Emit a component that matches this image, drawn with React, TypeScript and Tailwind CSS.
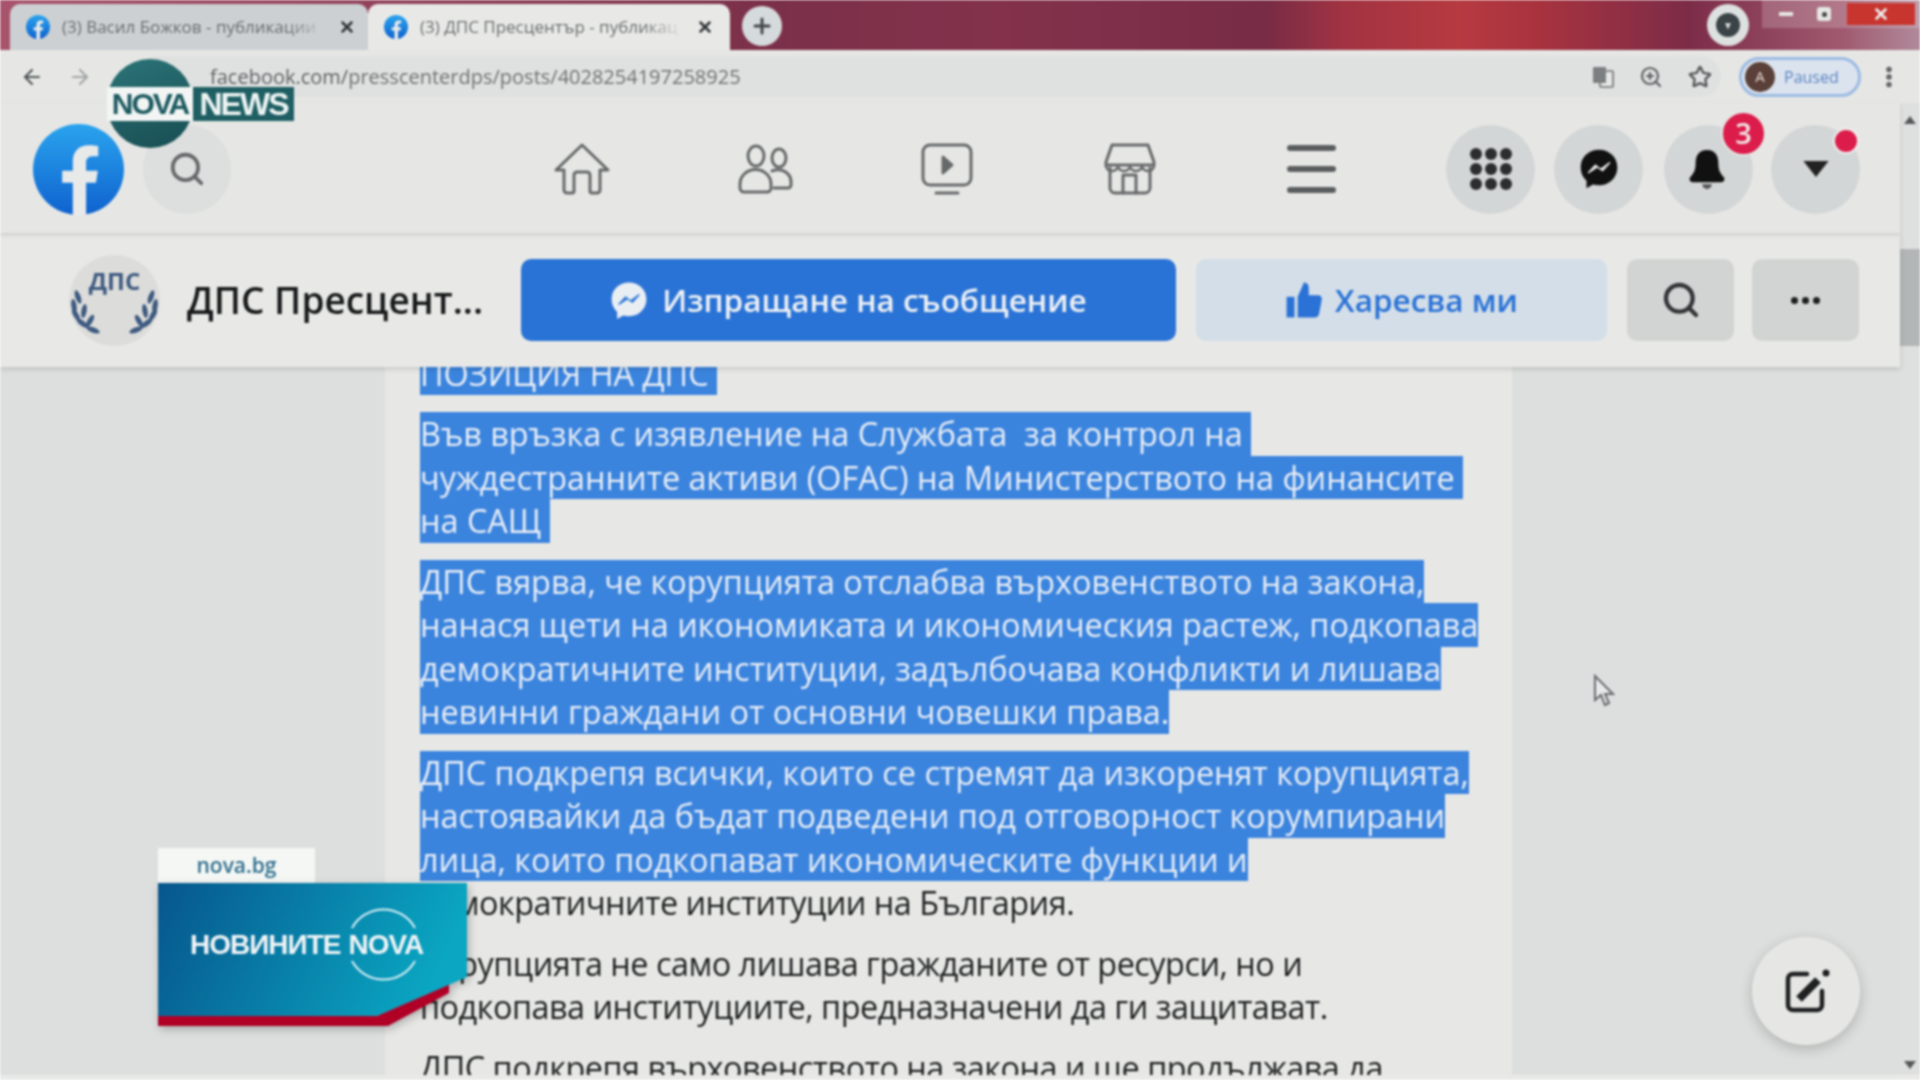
import { ArrowLeft, ArrowRight, EllipsisVertical, Plus, Search, Star, X, ZoomIn } from 'lucide-react';

const bodyFont = "font-['Open_Sans','Noto_Sans',sans-serif]";

const paragraphs: { lines: string[]; selected: boolean[] }[] = [
    { lines: ['ПОЗИЦИЯ НА ДПС '], selected: [true] },
    {
        lines: [
            'Във връзка с изявление на Службата  за контрол на ',
            'чуждестранните активи (OFAC) на Министерството на финансите ',
            'на САЩ ',
        ],
        selected: [true, true, true],
    },
    {
        lines: [
            'ДПС вярва, че корупцията отслабва върховенството на закона,',
            'нанася щети на икономиката и икономическия растеж, подкопава',
            'демократичните институции, задълбочава конфликти и лишава',
            'невинни граждани от основни човешки права.',
        ],
        selected: [true, true, true, true],
    },
    {
        lines: [
            'ДПС подкрепя всички, които се стремят да изкоренят корупцията,',
            'настоявайки да бъдат подведени под отговорност корумпирани',
            'лица, които подкопават икономическите функции и',
            'демократичните институции на България.',
        ],
        selected: [true, true, true, false],
    },
    {
        lines: ['Корупцията не само лишава гражданите от ресурси, но и', 'подкопава институциите, предназначени да ги защитават.'],
        selected: [false, false],
    },
    { lines: ['ДПС подкрепя върховенството на закона и ще продължава да'], selected: [false] },
];

// laurel leaves of the page avatar: cx, cy, rotation
const leaves: [number, number, number][] = [
    [9, 8, 70],
    [5, 17, 80],
    [7, 26, 60],
    [15, 22, 100],
    [13, 34, 40],
    [21, 32, 120],
    [24, 41, 20],
];

function FbGlyph({ size }: { size: number }) {
    return (
        <svg width={size} height={size} viewBox="0 0 24 24" className="shrink-0">
            <defs>
                <linearGradient id={`fb${size}`} x1="0" y1="0" x2="0" y2="1">
                    <stop offset="0" stopColor="#2aa4ee" />
                    <stop offset="1" stopColor="#0f62cf" />
                </linearGradient>
            </defs>
            <circle cx="12" cy="12" r="12" fill={`url(#fb${size})`} />
            <path
                d="M16.6 15.5l.5-3.2h-3.1v-2.1c0-.9.4-1.7 1.8-1.7h1.4V5.8s-1.3-.2-2.5-.2c-2.5 0-4.2 1.5-4.2 4.3v2.4H7.7v3.2h2.8V24h3.5v-8.5z"
                fill="#e8eaea"
            />
        </svg>
    );
}

function Tab({ title, active }: { title: string; active?: boolean }) {
    return (
        <div
            className={`flex h-[46px] shrink-0 items-center rounded-t-[10px] pl-[16px] ${
                active ? 'w-[362px] bg-[#e8e9e7] pr-[16px]' : 'w-[358px] bg-[#ccd0d2] pr-[12px]'
            }`}
        >
            <FbGlyph size={24} />
            <span className="ml-[12px] w-[262px] overflow-hidden whitespace-nowrap text-[17px] text-[#6b6e70] font-['Open_Sans',sans-serif] [mask-image:linear-gradient(90deg,#000_85%,transparent)]">
                {title}
            </span>
            <X size={18} strokeWidth={3.4} className="ml-auto text-[#33363a]" />
        </div>
    );
}

function Toolbar() {
    return (
        <div className="flex h-[53px] items-center bg-[#e6e7e5] pl-[20px]">
            <ArrowLeft size={24} strokeWidth={2.2} className="text-[#55585a]" />
            <ArrowRight size={24} strokeWidth={2.2} className="ml-[24px] text-[#a3a6a7]" />
            <div className="ml-[44px] flex h-[41px] w-[1585px] items-center rounded-full bg-[#dfe1e0] pl-[74px] pr-[9px]">
                <span className="text-[20px] font-['Open_Sans',sans-serif] text-[#5f6264]">
                    facebook.com/<span className="text-[#6f7173]">presscenterdps/posts/4028254197258925</span>
                </span>
                <svg width="24" height="24" viewBox="0 0 24 24" className="ml-auto mr-[24px] text-[#6d7072]">
                    <rect x="9" y="6" width="13" height="16" rx="1" fill="#e6e7e5" stroke="currentColor" strokeWidth="1.6" />
                    <rect x="2" y="2" width="13" height="16" rx="1" fill="#7c7f81" />
                </svg>
                <ZoomIn size={24} strokeWidth={2.2} className="mr-[25px] text-[#5f6264]" />
                <Star size={24} strokeWidth={2.4} className="text-[#55585a]" />
            </div>
            <div className="ml-[18px] flex h-[40px] w-[122px] items-center rounded-full border-[3px] border-[#9dbbe3] bg-[#dbe3ee] pl-[3px]">
                <div className="flex h-[30px] w-[30px] items-center justify-center rounded-full bg-[#5a4038] text-[15px] text-[#e8d8d0] font-['Open_Sans',sans-serif]">
                    A
                </div>
                <span className="ml-[9px] text-[16px] text-[#5c86c4] font-['Open_Sans',sans-serif]">Paused</span>
            </div>
            <EllipsisVertical size={26} strokeWidth={3} className="ml-[15px] text-[#55585a]" />
        </div>
    );
}

function NavIcon({ width, height, marginClass, children }: { width: number; height: number; marginClass: string; children: React.ReactNode }) {
    return (
        <svg
            width={width}
            height={height}
            viewBox={`0 0 ${width} ${height}`}
            fill="none"
            stroke="#66696a"
            strokeWidth="3"
            strokeLinejoin="round"
            strokeLinecap="round"
            className={`shrink-0 ${marginClass}`}
        >
            {children}
        </svg>
    );
}

function RoundButton({ marginClass, children }: { marginClass: string; children: React.ReactNode }) {
    return (
        <div className={`relative flex h-[89px] w-[89px] shrink-0 items-center justify-center rounded-full bg-[#d3d6d6] ${marginClass}`}>
            {children}
        </div>
    );
}

function TopNav() {
    return (
        <div className="relative z-20 flex h-[130px] shrink-0 items-center bg-[#e6e7e5] pl-[33px] pt-[2px] shadow-[0_2px_4px_rgba(0,0,0,0.12)]">
            <FbGlyph size={91} />
            <div className="ml-[19px] flex h-[89px] w-[88px] items-center justify-center rounded-full bg-[#dcdfde]">
                <Search size={38} strokeWidth={2.4} className="text-[#66696a]" />
            </div>
            <NavIcon width={58} height={54} marginClass="ml-[322px]">
                <path d="M3 28 L29 3 L55 28 H47 V48 a3 3 0 0 1 -3 3 H39 a2 2 0 0 1 -2 -2 V33 a3 3 0 0 0 -3 -3 H24 a3 3 0 0 0 -3 3 V49 a2 2 0 0 1 -2 2 H14 a3 3 0 0 1 -3 -3 V28 Z" />
            </NavIcon>
            <NavIcon width={57} height={50} marginClass="ml-[126px]">
                <ellipse cx="19" cy="12" rx="8" ry="10" />
                <ellipse cx="42" cy="14" rx="7" ry="9" />
                <path d="M3 40 a15 14 0 0 1 31 0 V44 a4 4 0 0 1 -4 4 H7 a4 4 0 0 1 -4 -4 Z" />
                <path d="M35 27 C46 23 54 30 54 38 V41 a3 3 0 0 1 -3 3 H37" />
            </NavIcon>
            <NavIcon width={54} height={54} marginClass="ml-[126px]">
                <rect x="3" y="3" width="48" height="40" rx="7" />
                <path d="M23 15 L32 23 L23 31 Z" fill="#66696a" />
                <path d="M16 51 H38" />
            </NavIcon>
            <NavIcon width={54} height={54} marginClass="ml-[129px]">
                <path d="M9 3 H45 L51 20 V23 H3 V20 Z" />
                <path d="M3 24 a6 5 0 0 0 12 0 a6 5 0 0 0 12 0 a6 5 0 0 0 12 0 a6 5 0 0 0 12 0" strokeWidth="2.5" />
                <path d="M7 26 V46 a5 5 0 0 0 5 5 H42 a5 5 0 0 0 5 -5 V26" />
                <path d="M20 51 V33 H33 V51" />
            </NavIcon>
            <div className="ml-[130px] flex w-[49px] shrink-0 flex-col gap-[15px]">
                <div className="h-[6px] rounded-full bg-[#5a5d5e]" />
                <div className="h-[6px] rounded-full bg-[#5a5d5e]" />
                <div className="h-[6px] rounded-full bg-[#5a5d5e]" />
            </div>
            <RoundButton marginClass="ml-[110px]">
                <div className="grid grid-cols-3 gap-[3px]">
                    {Array.from({ length: 9 }).map((_, i) => (
                        <div key={i} className="h-[12px] w-[12px] rounded-full bg-[#2b2d2e]" />
                    ))}
                </div>
            </RoundButton>
            <RoundButton marginClass="ml-[19px]">
                <svg width="40" height="42" viewBox="0 0 24 25">
                    <path d="M12 1C5.8 1 1 5.500 1 11.600c0 3.200 1.300 6 3.500 7.900V24l3.900-2.200c1.100.3 2.300.5 3.600.5 6.200 0 11-4.600 11-10.700S18.200 1 12 1z" fill="#111" />
                    <path d="M5.500 14.800 L9.800 10.200 L13 12.600 L18.500 8.600 L14.200 13.400 L11 11.200 Z" fill="#e9eaea" stroke="#e9eaea" strokeWidth="0.8" />
                </svg>
            </RoundButton>
            <RoundButton marginClass="ml-[21px]">
                <svg width="36" height="42" viewBox="0 0 38 44" fill="#111" className="mr-[3px] mt-[2px]">
                    <path d="M19 1 C9 1 7 9 7 15 C7 22 5 26 1 30 C0 32 1 35 4 35 H34 C37 35 38 32 37 30 C33 26 31 22 31 15 C31 9 29 1 19 1 Z" />
                    <path d="M14 37 H24 A5 5 0 0 1 14 37 Z" fill="#555" />
                </svg>
                <div className="absolute right-[-13px] top-[-14px] flex h-[45px] w-[45px] items-center justify-center rounded-full border-2 border-[#e6e7e5] bg-[#dc1c4a] text-[29px] font-semibold text-[#f1e9ea] font-['Open_Sans',sans-serif]">
                    3
                </div>
            </RoundButton>
            <RoundButton marginClass="ml-[18px]">
                <svg width="28" height="18" viewBox="0 0 30 20">
                    <path d="M1 1 H29 L15 19 Z" fill="#222" />
                </svg>
                <div className="absolute right-[1px] top-[3px] h-[26px] w-[26px] rounded-full border-2 border-[#eef0ee] bg-[#dc1c4a]" />
            </RoundButton>
        </div>
    );
}

function PageBar() {
    return (
        <div className="relative z-10 flex h-[134px] shrink-0 items-center bg-[#e8e9e7] pl-[69px] shadow-[0_2px_5px_rgba(0,0,0,0.14)]">
            <div className="relative flex h-[91px] w-[91px] shrink-0 flex-col items-center rounded-full bg-[#dcdcda] pt-[14px]">
                <span className="text-[24px] font-bold leading-none text-[#3e5a80] font-['Open_Sans',sans-serif]">ДПС</span>
                <svg width="91" height="48" viewBox="0 0 91 48" className="absolute left-0 top-[34px]" fill="#3e5a80">
                    {leaves.map(([cx, cy, r], i) => (
                        <g key={i}>
                            <ellipse cx={cx} cy={cy} rx="7" ry="2.6" transform={`rotate(${r} ${cx} ${cy})`} />
                            <ellipse cx={91 - cx} cy={cy} rx="7" ry="2.6" transform={`rotate(${-r} ${91 - cx} ${cy})`} />
                        </g>
                    ))}
                </svg>
            </div>
            <div className={`ml-[27px] w-[334px] shrink-0 whitespace-nowrap text-[37px] font-semibold text-[#17191a] ${bodyFont}`}>
                ДПС Пресцент...
            </div>
            <div className="flex h-[82px] w-[655px] shrink-0 items-center justify-center rounded-[10px] bg-[#2a73d6]">
                <svg width="38" height="38" viewBox="0 0 24 24">
                    <path d="M12 1C5.800 1 1 5.500 1 11.600c0 3.200 1.300 6 3.500 7.900V24l3.900-2.200c1.100.3 2.300.5 3.600.5 6.200 0 11-4.600 11-10.700S18.200 1 12 1z" fill="#e9eef3" />
                    <path d="M5.500 14.800 L9.800 10.200 L13 12.600 L18.500 8.600 L14.200 13.400 L11 11.200 Z" fill="#2a73d6" stroke="#2a73d6" strokeWidth="0.8" />
                </svg>
                <span className={`ml-[14px] text-[31.500px] font-semibold text-[#eef1f4] ${bodyFont}`}>Изпращане на съобщение</span>
            </div>
            <div className="ml-[20px] flex h-[82px] w-[411px] shrink-0 items-center justify-center rounded-[10px] bg-[#d3dee8]">
                <svg width="38" height="38" viewBox="0 0 24 24" fill="#2a72d6">
                    <path d="M1 10h5v13H1z" />
                    <path d="M8 10l4-9c2 0 3 1.500 3 3.500V9h6c1.500 0 2.500 1.200 2.200 2.800l-1.700 9c-.3 1.300-1.300 2.200-2.700 2.200H8z" />
                </svg>
                <span className={`ml-[12px] text-[31.500px] font-semibold text-[#2a72d6] ${bodyFont}`}>Харесва ми</span>
            </div>
            <div className="ml-[20px] flex h-[82px] w-[107px] shrink-0 items-center justify-center rounded-[10px] bg-[#d2d4d3]">
                <Search size={40} strokeWidth={2.6} className="text-[#333638]" />
            </div>
            <div className="ml-[18px] flex h-[82px] w-[107px] shrink-0 items-center justify-center gap-[4px] rounded-[10px] bg-[#d2d4d3]">
                <div className="h-[7px] w-[7px] rounded-full bg-[#1c1e1f]" />
                <div className="h-[7px] w-[7px] rounded-full bg-[#1c1e1f]" />
                <div className="h-[7px] w-[7px] rounded-full bg-[#1c1e1f]" />
            </div>
        </div>
    );
}

function PostText() {
    return (
        <div className={`ml-[385px] mt-[-15.5px] flex w-[1127px] flex-col gap-[17px] bg-[#e7e8e6] pl-[35px] text-[32.4px] leading-[43.5px] ${bodyFont}`}>
            {paragraphs.map((p, i) => (
                <div key={i}>
                    {p.lines.map((line, j) => (
                        <div key={j} className={`w-fit whitespace-pre ${p.selected[j] ? 'bg-[#3b84de] text-[#e9eef5]' : 'tracking-[-0.5px] text-[#1d1f20]'}`}>
                            {line}
                        </div>
                    ))}
                </div>
            ))}
        </div>
    );
}

function NewsBanner() {
    return (
        <div className="absolute left-[158px] top-[848px] w-[309px]">
            <div className="flex h-[35px] w-[157px] items-center justify-center bg-[#f5f7f5] text-[21px] font-semibold text-[#31708e] font-['Open_Sans',sans-serif]">
                nova.bg
            </div>
            <svg width="309" height="144" viewBox="0 0 309 144" className="block drop-shadow-[2px_3px_4px_rgba(0,0,0,0.25)]">
                <defs>
                    <linearGradient id="newsBlue" x1="0" y1="0" x2="1" y2="0.2">
                        <stop offset="0" stopColor="#07568c" />
                        <stop offset="1" stopColor="#0aa6c2" />
                    </linearGradient>
                </defs>
                <path d="M0 133 V143 H230 L291 110 V97 L219 133 Z" fill="#b00026" />
                <path d="M0 0 H309 V94 L219 133 H0 Z" fill="url(#newsBlue)" />
                <path d="M194 45 A36 36 0 0 1 257 45 M257 78 A36 36 0 0 1 194 78" fill="none" stroke="#d8eef4" strokeWidth="2" />
            </svg>
            <div className="absolute left-[32px] top-[83px] flex items-center text-[28px] font-bold leading-none tracking-[-1px] text-[#f0f4f6] font-['Liberation_Sans',sans-serif]">
                НОВИНИТЕ<span className="ml-[8px]">NOVA</span>
            </div>
        </div>
    );
}

export default function App() {
    return (
        <div className="relative flex h-screen w-full flex-col overflow-hidden bg-[#e6e7e5] blur-[0.8px]">
            <div className="flex h-[50px] shrink-0 items-end bg-[linear-gradient(90deg,#a8546c_0%,#7b3049_40%,#84324c_52%,#782c46_66%,#a23342_70%,#b63a40_76%,#a8333f_80%,#7c2c48_88%,#a05a70_96%,#b08a9a_100%)] pl-[10px]">
                <Tab title="(3) Васил Божков - публикации" />
                <Tab title="(3) ДПС Пресцентър - публикац" active />
                <div className="mb-[4px] ml-[12px] flex h-[40px] w-[40px] shrink-0 items-center justify-center rounded-full bg-[#d5dadc]">
                    <Plus size={24} strokeWidth={3} className="text-[#44474a]" />
                </div>
                <div className="mb-[4px] ml-[925px] flex h-[42px] w-[42px] shrink-0 items-center justify-center rounded-full bg-[#dde1e0]">
                    <div className="flex h-[24px] w-[24px] items-center justify-center rounded-full bg-[#3a4446] text-[10px] text-[#dde1e0]">▼</div>
                </div>
                <div className="ml-[13px] flex h-[28px] w-[158px] shrink-0 items-center self-start bg-[#ffffff30] pl-[17px]">
                    <div className="h-[4px] w-[14px] bg-[#e6e7e5]" />
                    <div className="ml-[24px] flex h-[14px] w-[14px] items-center justify-center rounded-[3px] bg-[#e6e7e5]">
                        <div className="h-[5px] w-[5px] rounded-full bg-[#444]" />
                    </div>
                    <div className="ml-[16px] flex h-[22px] w-[68px] items-center justify-center bg-[#c8352f]">
                        <X size={18} strokeWidth={3.5} className="text-[#eee]" />
                    </div>
                </div>
            </div>
            <Toolbar />
            <div className="flex min-h-0 flex-1">
                <div className="flex min-w-0 flex-1 flex-col">
                    <TopNav />
                    <PageBar />
                    <div className="relative min-h-0 flex-1 overflow-hidden bg-[#dcdfde]">
                        <PostText />
                    </div>
                </div>
                <div className="relative flex w-[20px] shrink-0 flex-col items-center bg-[#dee0df]">
                    <div className="mt-[13px] h-0 w-0 border-x-[6px] border-b-[8px] border-x-transparent border-b-[#55585a]" />
                    <div className="mt-[125px] h-[97px] w-full bg-[#b3b6b6]" />
                    <div className="mb-[6px] mt-auto h-0 w-0 border-x-[6px] border-t-[8px] border-x-transparent border-t-[#55585a]" />
                </div>
                <NewsBanner />
                <div className="absolute left-[1752px] top-[937px] flex h-[108px] w-[108px] items-center justify-center rounded-full bg-[#e6e7e5] shadow-[0_4px_14px_rgba(0,0,0,0.2)]">
                    <svg width="46" height="44" viewBox="0 0 46 44" fill="none" stroke="#1e2021" strokeWidth="4.5" strokeLinecap="round" strokeLinejoin="round" className="ml-[4px]">
                        <path d="M22 5 H8 a5 5 0 0 0 -5 5 V36 a5 5 0 0 0 5 5 H32 a5 5 0 0 0 5 -5 V22" />
                        <path d="M14 30 L33 11" strokeWidth="8" strokeLinecap="butt" />
                        <circle cx="41" cy="4" r="3.5" fill="#1e2021" stroke="none" />
                    </svg>
                </div>
                <svg width="24" height="34" viewBox="0 0 24 34" className="absolute left-[1592px] top-[674px]">
                    <path d="M3 2 V26 L9 21 L13 31 L17 29 L13 20 H21 Z" fill="#e8eaea" stroke="#6a6d70" strokeWidth="2" />
                </svg>
            </div>
            <div className="h-[5px] shrink-0 bg-[#e9eae8]" />
            <div className="absolute left-[107px] top-[59px] z-30 h-[89px] w-[86px] rounded-full bg-[linear-gradient(160deg,#2b7478,#184d52)]" />
            <div className="absolute left-[107px] top-[87px] z-30 flex h-[34px] items-stretch font-['Liberation_Sans',sans-serif] font-bold leading-[34px] tracking-[-2px]">
                <div className="flex w-[86px] items-center justify-center overflow-hidden bg-[#f2f5f4] text-[30px] text-[#1c5a60]">NOVA</div>
                <div className="flex w-[101px] items-center justify-center bg-[#1f5f64] text-[32px] text-[#eef5f3]">NEWS</div>
            </div>
        </div>
    );
}
